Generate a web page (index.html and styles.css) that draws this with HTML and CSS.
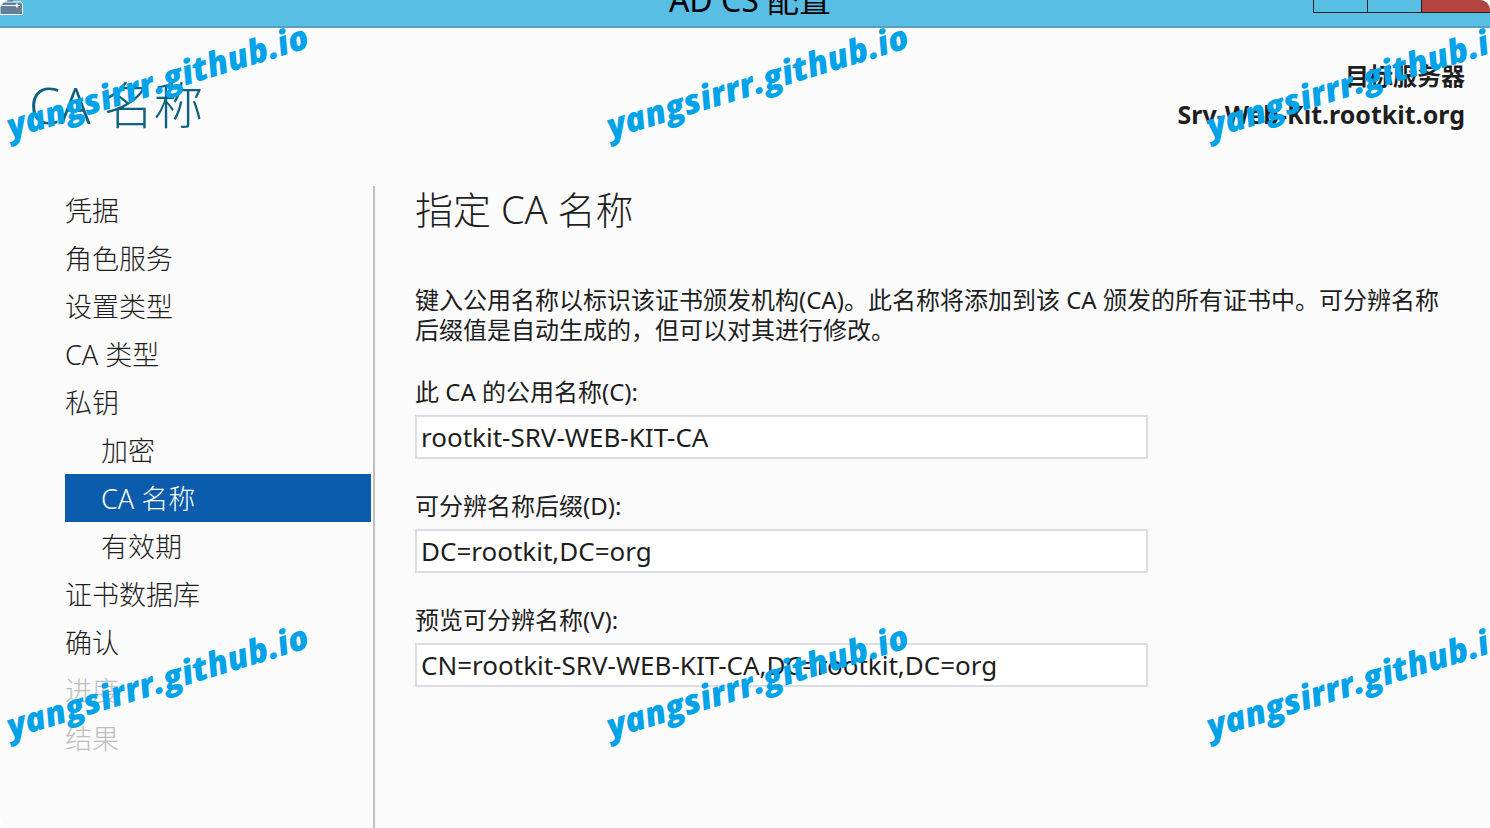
FILE: index.html
```html
<!DOCTYPE html>
<html lang="zh-CN">
<head>
<meta charset="utf-8">
<meta name="viewport" content="width=device-width, initial-scale=1">
<title>AD CS 配置</title>
<link rel="stylesheet" href="styles.css">
</head>
<body>
<div class="window">
  <div class="titlebar">
    <svg class="app-icon" viewBox="0 0 24 16" aria-hidden="true">
      <path d="M0 6 3 2H21L22.500 4V14.500H0Z" fill="#667f99" stroke="#fff"/>
      <path d="M7 .5H13" stroke="#667f99" stroke-width="2"/>
      <path d="M0 0H6L0 7Z" fill="#fff"/>
      <path d="M1 5.500H20" stroke="#fff"/>
      <path d="M17 3.500V7.500M15.500 5.500H18.500" stroke="#fff" stroke-width="1.500"/>
    </svg>
    <div class="title">AD CS 配置</div>
    <div class="controls">
      <button class="control" type="button" aria-label="最小化"></button>
      <button class="control" type="button" aria-label="最大化"></button>
      <button class="control close" type="button" aria-label="关闭"></button>
    </div>
  </div>
  <header class="header">
    <h1 class="page-title">CA 名称</h1>
    <div class="target">
      <div>目标服务器</div>
      <div class="host">Srv-Web-Kit.rootkit.org</div>
    </div>
  </header>
  <div class="body">
    <nav class="steps">
      <a class="step" href="#">凭据</a>
      <a class="step" href="#">角色服务</a>
      <a class="step" href="#">设置类型</a>
      <a class="step" href="#">CA 类型</a>
      <a class="step" href="#">私钥</a>
      <a class="step sub" href="#">加密</a>
      <a class="step sub active" href="#" aria-current="step">CA 名称</a>
      <a class="step sub" href="#">有效期</a>
      <a class="step" href="#">证书数据库</a>
      <a class="step" href="#">确认</a>
      <a class="step disabled" aria-disabled="true">进度</a>
      <a class="step disabled" aria-disabled="true">结果</a>
    </nav>
    <main class="content">
      <h2 class="heading">指定 CA 名称</h2>
      <p class="intro">键入公用名称以标识该证书颁发机构(CA)。此名称将添加到该 CA 颁发的所有证书中。可分辨名称后缀值是自动生成的，但可以对其进行修改。</p>
      <form class="form">
        <div class="field">
          <label for="common">此 CA 的公用名称(C):</label>
          <input id="common" type="text" value="rootkit-SRV-WEB-KIT-CA">
        </div>
        <div class="field">
          <label for="suffix">可分辨名称后缀(D):</label>
          <input id="suffix" type="text" value="DC=rootkit,DC=org">
        </div>
        <div class="field">
          <label for="preview">预览可分辨名称(V):</label>
          <input id="preview" type="text" value="CN=rootkit-SRV-WEB-KIT-CA,DC=rootkit,DC=org">
        </div>
      </form>
    </main>
  </div>
  <div class="watermarks" aria-hidden="true">
    <div class="cell"><span class="mark">yangsirrr.github.io</span></div>
    <div class="cell"><span class="mark">yangsirrr.github.io</span></div>
    <div class="cell"><span class="mark">yangsirrr.github.io</span></div>
    <div class="cell"><span class="mark">yangsirrr.github.io</span></div>
    <div class="cell"><span class="mark">yangsirrr.github.io</span></div>
    <div class="cell"><span class="mark">yangsirrr.github.io</span></div>
  </div>
</div>
</body>
</html>
```
FILE: styles.css
```css
* {
  box-sizing: border-box;
}

body {
  margin: 0;
  background: #fff;
  color: #1e1e1e;
  font-family: "Noto Sans", "Noto Sans CJK SC", sans-serif;
  font-size: 24px;
}

.window {
  position: relative;
  display: flex;
  flex-direction: column;
  min-height: 100vh;
  overflow: hidden;
  border-radius: 10px;
  background: #fbfbfb;
}

.titlebar {
  display: grid;
  grid-template-rows: 26px;
  grid-template-columns: 1fr auto 1fr;
  height: 28px;
  overflow: hidden;
  border-bottom: 2px solid #5c9cbd;
  background: #58bee4;
}

.app-icon {
  width: 24px;
  height: 16px;
  fill: none;
}

.title {
  align-self: end;
  padding: 0 0 8px 10px;
  color: #000;
  font-size: 32px;
  line-height: 36px;
}

.controls {
  display: flex;
  justify-content: flex-end;
  height: 13px;
}

.control {
  width: 54px;
  padding: 0;
  border: solid #222;
  border-width: 0 0 1px 1px;
  background: transparent;
}

.close {
  width: 69px;
  background: #b4443f;
}

.header {
  display: flex;
  justify-content: space-between;
  padding: 29px 25px 0 29px;
  height: 158px;
}

.page-title {
  margin: 0;
  padding-top: 16px;
  color: #0f6180;
  font-size: 50px;
  font-weight: 300;
  line-height: 64px;
}

.target {
  font-weight: 700;
  line-height: 38px;
  text-align: right;
}

.host {
  font-size: 25px;
}

.body {
  display: flex;
  flex: 1;
}

.steps {
  display: flex;
  flex: 0 0 375px;
  flex-direction: column;
  padding: 0 2px 0 65px;
  border-right: 2px solid #c0c0c0;
}

.step {
  height: 48px;
  color: #1e1e1e;
  font-size: 27px;
  font-weight: 300;
  line-height: 50px;
  text-decoration: none;
}

.sub {
  padding-left: 36px;
}

.active {
  background: #0b5cad;
  color: #fff;
}

.disabled {
  color: #bebebe;
}

.content {
  flex: 1;
  padding: 0 40px;
}

.heading {
  margin: 0 0 53px;
  font-size: 38px;
  font-weight: 300;
  line-height: 46px;
}

.intro {
  margin: 0 0 32px;
  line-height: 30px;
}

.form {
  display: flex;
  flex-direction: column;
  gap: 32px;
  max-width: 733px;
}

.field {
  display: flex;
  flex-direction: column;
  gap: 8px;
}

.field label {
  line-height: 30px;
}

.field input {
  height: 44px;
  padding: 0 4px;
  border: 2px solid #dcdce4;
  background: #fff;
  color: #1e1e1e;
  font: inherit;
  font-size: 26px;
}

.watermarks {
  position: absolute;
  inset: 0;
  display: grid;
  grid-template-columns: repeat(3, 600px);
  grid-auto-rows: 600px;
  overflow: hidden;
  pointer-events: none;
}

.mark {
  display: block;
  width: max-content;
  padding: 106px 0 0 10px;
  color: #00a2e8;
  font-family: "Open Sans", sans-serif;
  font-size: 34px;
  font-style: italic;
  font-weight: 800;
  line-height: 40px;
  transform: rotate(-17deg);
  transform-origin: 10px 136px;
}
```
